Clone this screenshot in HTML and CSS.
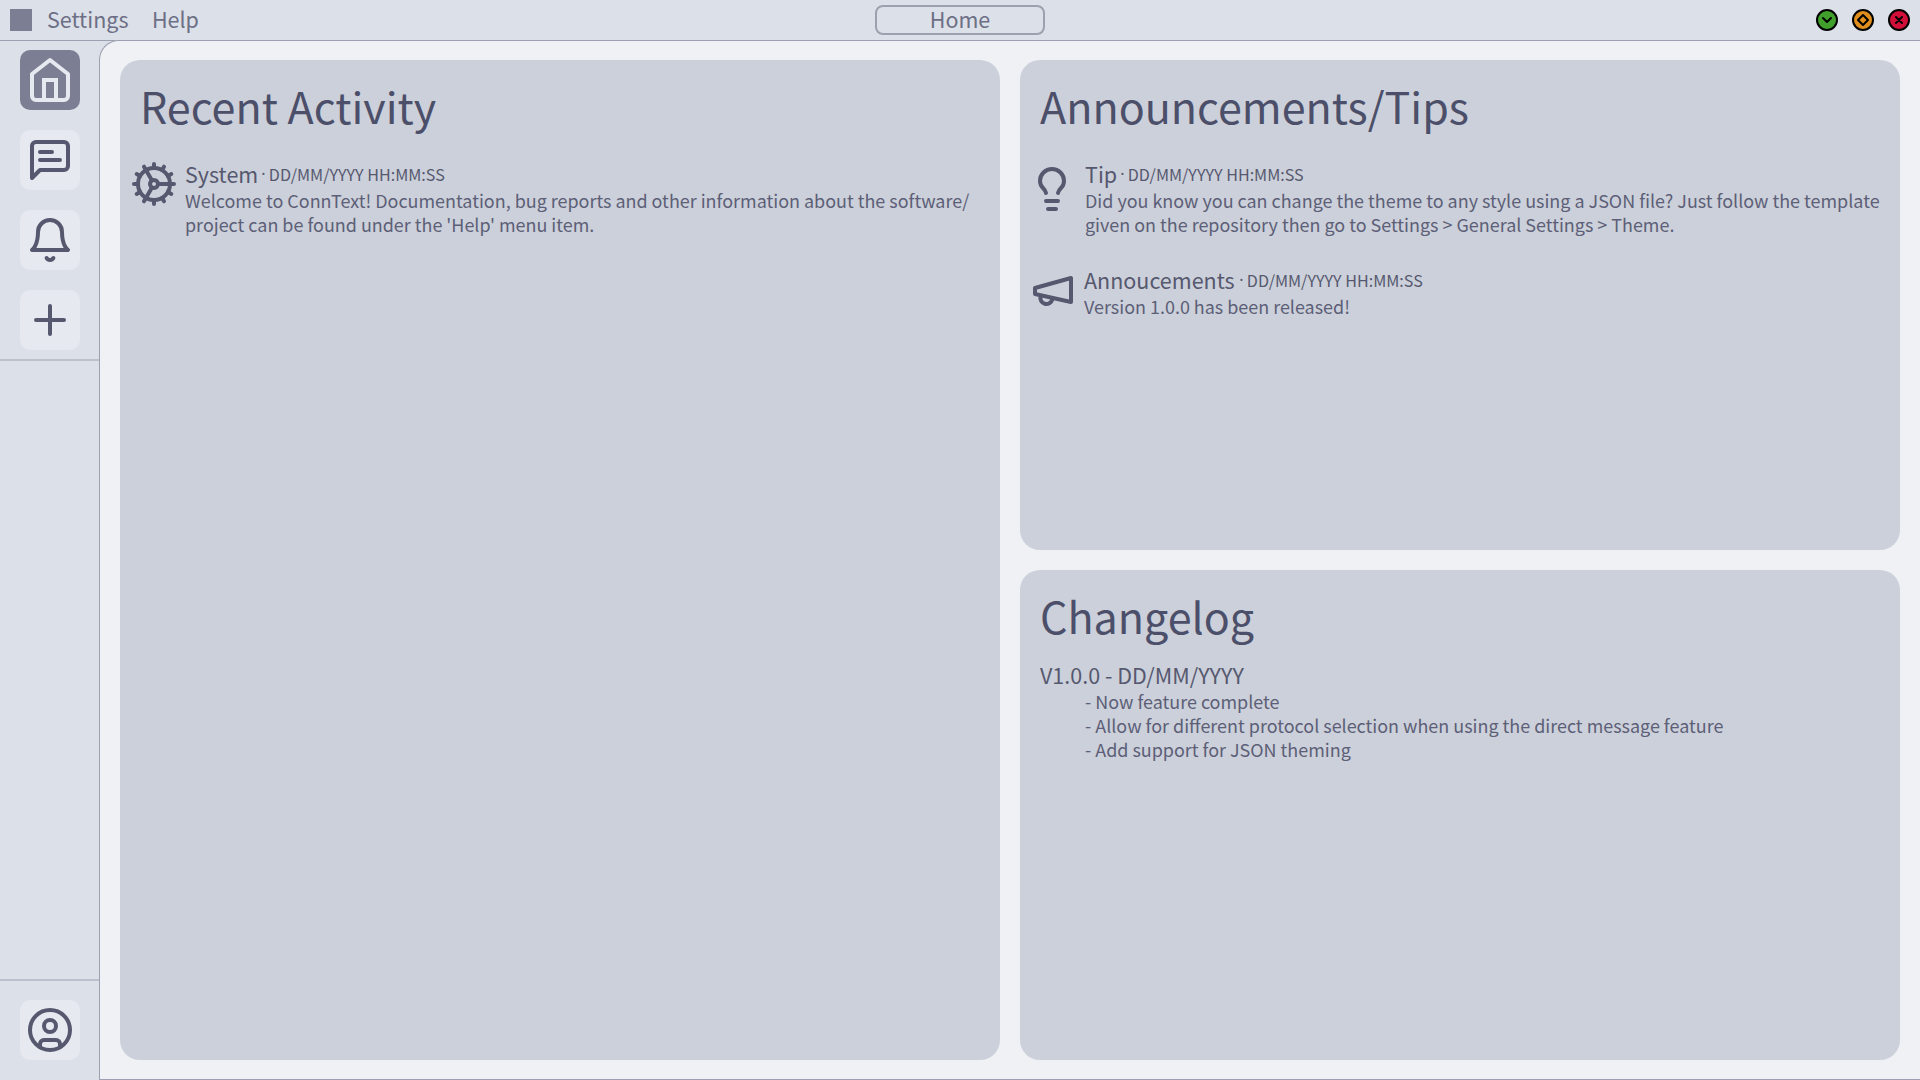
FILE: index.html
```
<!DOCTYPE html>
<html lang="en">
<head>
<meta charset="utf-8">
<title>ConnText</title>
<link rel="stylesheet" href="styles.css">
</head>
<body>
<header class="topbar">
  <nav class="menu">
    <span class="app-mark"></span>
    <span class="menu-item">Settings</span>
    <span class="menu-item">Help</span>
  </nav>
  <div class="location">Home</div>
  <div class="window-controls">
    <svg class="control" viewBox="0 0 22 22"><circle class="minimise" cx="11" cy="11" r="10"/><path d="M7 9l4 4 4-4"/></svg>
    <svg class="control" viewBox="0 0 22 22"><circle class="maximise" cx="11" cy="11" r="10"/><path d="M11 6l5 5-5 5-5-5z"/></svg>
    <svg class="control" viewBox="0 0 22 22"><circle class="close" cx="11" cy="11" r="10"/><path d="M8 8l6 6M14 8l-6 6"/></svg>
  </div>
</header>
<div class="workspace">
  <aside class="sidebar">
    <div class="group">
      <div class="tile active"><svg class="icon" viewBox="0 0 24 24"><path d="M3 9l9-7 9 7v11a2 2 0 0 1-2 2H5a2 2 0 0 1-2-2z"/><path class="door" d="M9 22V12h6v10"/></svg></div>
      <div class="tile"><svg class="icon" viewBox="0 0 24 24"><path d="M21 15a2 2 0 0 1-2 2H7l-4 4V5a2 2 0 0 1 2-2h14a2 2 0 0 1 2 2z"/><path d="M13 8H7M17 12H7"/></svg></div>
      <div class="tile"><svg class="icon" viewBox="0 0 24 24"><path d="M6 8a6 6 0 0 1 12 0c0 7 3 9 3 9H3s3-2 3-9"/><path d="M10.3 21a1.94 1.94 0 0 0 3.4 0"/></svg></div>
      <div class="tile"><svg class="icon" viewBox="0 0 24 24"><path d="M5 12h14M12 5v14"/></svg></div>
    </div>
    <div class="group account">
      <div class="tile"><svg class="icon" viewBox="0 0 24 24"><circle cx="12" cy="12" r="10"/><circle cx="12" cy="10" r="3"/><path d="M7 20.662V19a2 2 0 0 1 2-2h6a2 2 0 0 1 2 2v1.662"/></svg></div>
    </div>
  </aside>
  <main class="content">
    <section class="panel activity">
      <h1 class="title">Recent Activity</h1>
      <article class="entry">
        <svg class="icon gear" viewBox="0 0 24 24"><circle cx="12" cy="12" r="8"/><circle cx="12" cy="12" r="2"/><path d="M14 12h8M11 10.27L7 3.34M11 13.73l-4 6.93M12 2v2M12 22v-2M2 12h2M17 20.66l-1-1.73M17 3.34l-1 1.73M20.66 17l-1.73-1M20.66 7l-1.73 1M3.34 17l1.73-1M3.34 7l1.73 1"/></svg>
        <div class="body">
          <div class="meta"><span class="name">System</span><span class="dot">·</span><span class="date">DD/MM/YYYY HH:MM:SS</span></div>
          <p class="text">Welcome to ConnText! Documentation, bug reports and other information about the software/<br>project can be found under the 'Help' menu item.</p>
        </div>
      </article>
    </section>
    <section class="panel">
      <h1 class="title">Announcements/Tips</h1>
      <article class="entry">
        <svg class="icon bulb" viewBox="0 0 24 24"><path d="M15 14c.2-1 .7-1.7 1.5-2.5 1-.9 1.5-2.2 1.5-3.5A6 6 0 0 0 6 8c0 1 .2 2.2 1.5 3.5.7.7 1.3 1.5 1.5 2.5"/><path d="M9 18h6M10 22h4"/></svg>
        <div class="body">
          <div class="meta"><span class="name">Tip</span><span class="dot">·</span><span class="date">DD/MM/YYYY HH:MM:SS</span></div>
          <p class="text">Did you know you can change the theme to any style using a JSON file? Just follow the template<br>given on the repository then go to Settings &gt; General Settings &gt; Theme.</p>
        </div>
      </article>
      <article class="entry">
        <svg class="icon megaphone" viewBox="0 0 24 24"><path d="M3 11l18-5v12L3 14v-3z"/><path d="M11.6 16.8a3 3 0 1 1-5.8-1.6"/></svg>
        <div class="body">
          <div class="meta"><span class="name">Annoucements</span><span class="dot wide">·</span><span class="date">DD/MM/YYYY HH:MM:SS</span></div>
          <p class="text">Version 1.0.0 has been released!</p>
        </div>
      </article>
    </section>
    <section class="panel">
      <h1 class="title">Changelog</h1>
      <div class="release">
        <h2 class="name">V1.0.0 - DD/MM/YYYY</h2>
        <ul class="changes">
          <li>- Now feature complete</li>
          <li>- Allow for different protocol selection when using the direct message feature</li>
          <li>- Add support for JSON theming</li>
        </ul>
      </div>
    </section>
  </main>
</div>
</body>
</html>
```
FILE: styles.css
```
* { box-sizing: border-box; margin: 0; padding: 0; }

body {
  display: flex;
  flex-direction: column;
  height: 100vh;
  overflow: hidden;
  background: #dce0e8;
  color: #5c5f77;
  font-family: "Noto Sans CJK SC", "Noto Sans", sans-serif;
  font-size: 17.96px;
  line-height: 24px;
}

/* Top bar */
.topbar {
  display: grid;
  grid-template-columns: 1fr 170px 1fr;
  align-items: center;
  flex: none;
  height: 41px;
  border-bottom: 1px solid #9ca0b0;
  color: #6c6f85;
  font-size: 21.5px;
}

.menu { display: flex; align-items: center; padding-left: 10px; }
.app-mark { width: 22px; height: 22px; margin-right: 15px; background: #7c7f93; }
.menu-item { line-height: 28px; margin: -3px 23.5px 0 0; }

.location {
  height: 30px;
  border: 2px solid #9ca0b0;
  border-radius: 8px;
  line-height: 23px;
  text-align: center;
}

.window-controls { display: flex; justify-content: flex-end; gap: 14px; padding-right: 10px; }
.control {
  width: 22px;
  height: 22px;
  fill: none;
  stroke: #000;
  stroke-width: 2;
  stroke-linecap: round;
  stroke-linejoin: round;
}
.minimise { fill: #40a02b; }
.maximise { fill: #df8e1d; }
.close { fill: #d20f39; }

.workspace { display: flex; flex: 1; min-height: 0; }

/* Sidebar */
.sidebar { display: flex; flex-direction: column; justify-content: space-between; flex: none; width: 99px; }
.group {
  display: flex;
  flex-direction: column;
  gap: 20px;
  padding: 9px 0 9px 20px;
  border-bottom: 2px solid #bcc0cc;
}
.account { border-top: 2px solid #bcc0cc; border-bottom: 0; padding: 19px 0 20px 20px; }
.tile {
  display: flex;
  align-items: center;
  justify-content: center;
  width: 60px;
  height: 60px;
  border-radius: 10px;
  background: #e6e9ef;
}
.tile.active { background: #7c7f93; }
.tile.active .icon { stroke: #e6e9ef; }

.icon {
  flex: none;
  width: 48px;
  height: 48px;
  fill: none;
  stroke: #56586f;
  stroke-width: 2;
  stroke-linecap: round;
  stroke-linejoin: round;
}
.door { stroke-linejoin: miter; }

/* Panels */
.content {
  display: grid;
  flex: 1;
  grid-template-columns: 1fr 1fr;
  grid-template-rows: 1fr 1fr;
  gap: 20px;
  margin-top: -1px;
  padding: 19px 20px 19px 20px;
  border: solid #9ca0b0;
  border-width: 1px 0 1px 1px;
  border-top-left-radius: 20px;
  background: #eff1f5;
}
.panel { border-radius: 20px; background: #ccd0da; padding-top: 20px; }
.activity { grid-row: span 2; }

.title {
  padding-left: 20px;
  color: #4c4f69;
  font-size: 43.04px;
  font-weight: 400;
  line-height: 50px;
}

.entry { display: flex; margin-top: 30px; }
.gear { margin: 0 7px 0 10px; }
.bulb { margin: 5px 9px 0 8px; }
.megaphone { margin: 0 7px 0 9px; }

.meta { display: flex; align-items: center; }
.name { color: #56586f; font-size: 21.5px; font-weight: 400; line-height: 28px; }
.dot { width: 10.6px; color: #56586f; font-family: "Noto Sans", sans-serif; font-size: 16px; text-align: center; }
.dot.wide { width: 12.2px; padding-left: 1.6px; }
.date { color: #56586f; font-size: 16.13px; }
.name, .date, .text { white-space: nowrap; }

.release { margin: 21px 0 0 20px; }
.changes { padding-left: 45px; list-style: none; }
```
